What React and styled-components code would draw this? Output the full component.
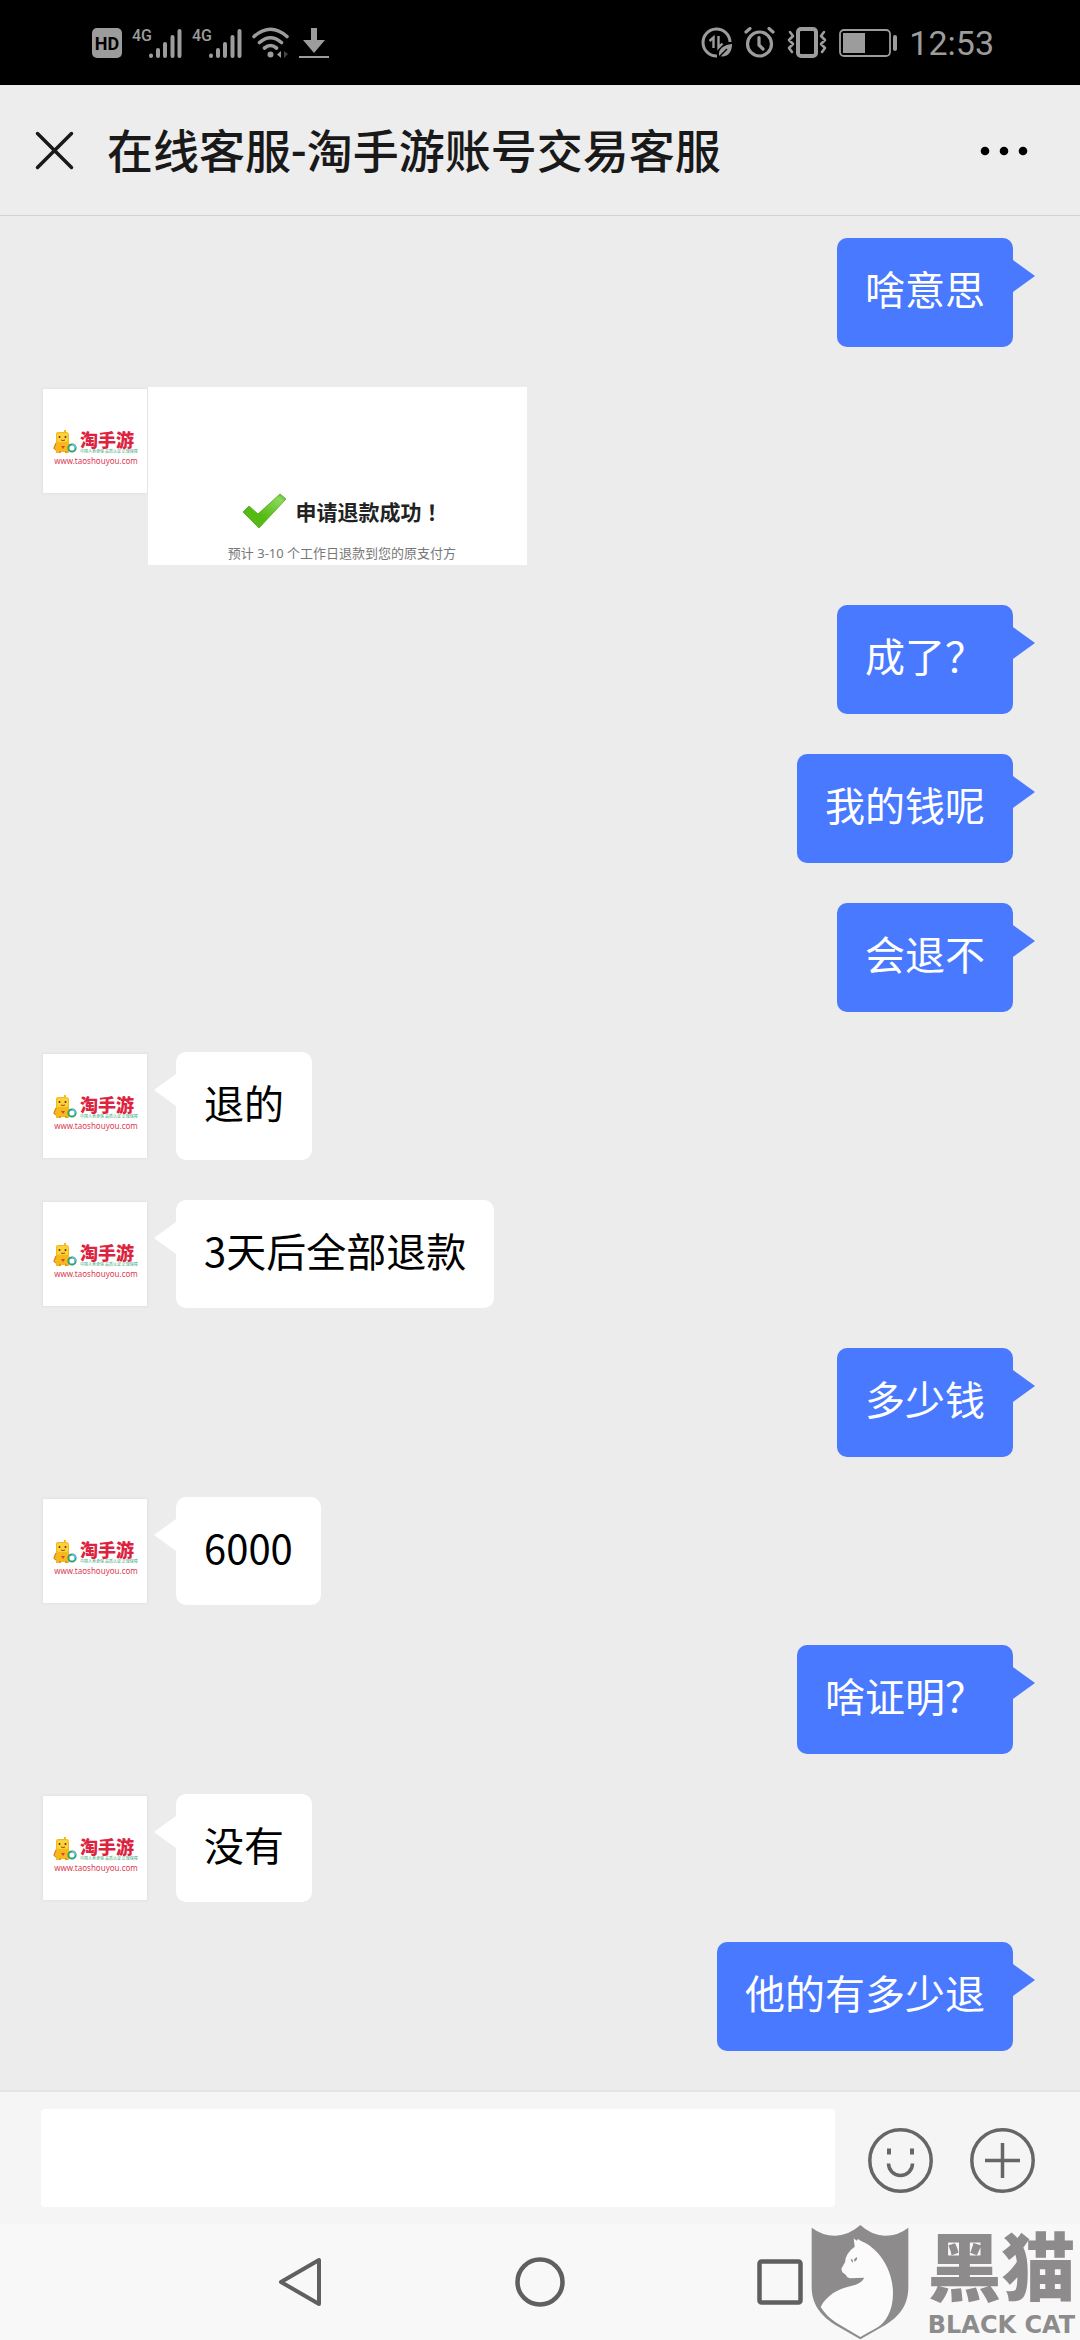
import React from 'react';
import styled, { createGlobalStyle } from 'styled-components';

const GlobalStyle = createGlobalStyle`
  * { box-sizing: border-box; }
  body {
    margin: 0;
    background: #ececec;
    font-family: "Noto Sans CJK SC", "Noto Sans", sans-serif;
    color: #000;
  }
  button {
    display: flex;
    padding: 0;
    border: 0;
    background: none;
    cursor: pointer;
  }
  svg { display: block; }
`;

const Screen = styled.div`
  display: flex;
  flex-direction: column;
  min-height: 100vh;
`;

const StatusBar = styled.div`
  display: flex;
  justify-content: space-between;
  align-items: center;
  height: 85px;
  padding: 0 86px 0 92px;
  background: #000;
  color: #9c9c9c;
`;

const StatusGroup = styled.div`
  display: flex;
  align-items: center;
  gap: ${(p) => p.$gap}px;
`;

const Clock = styled.time`
  font: 34px/40px Roboto, sans-serif;
`;

const Header = styled.header`
  display: flex;
  align-items: center;
  gap: 33px;
  height: 131px;
  padding: 0 52px 0 35px;
  background: #ededed;
  border-bottom: 1px solid #d2d2d2;
`;

const Title = styled.h1`
  flex: 1;
  margin: 0;
  padding-top: 4px;
  font-family: Roboto, "Noto Sans CJK SC", sans-serif;
  font-size: 46px;
  line-height: 60px;
  font-weight: 500;
  color: #191919;
`;

const Chat = styled.main`
  flex: 1;
  display: flex;
  flex-direction: column;
  gap: 40px;
  padding: 22px 42px 39px 43px;
`;

const Row = styled.div`
  display: flex;
  align-items: flex-start;
  justify-content: ${(p) => (p.$mine ? 'flex-end' : 'flex-start')};
  gap: ${(p) => (p.$tight ? 1 : 29)}px;
  padding-right: ${(p) => (p.$mine ? 25 : 0)}px;
`;

const Bubble = styled.p`
  position: relative;
  margin: 0;
  padding: 20px 28px 28px;
  border-radius: 10px;
  font-size: 40px;
  line-height: ${(p) => (p.$mine ? 61 : 60)}px;
  color: ${(p) => (p.$mine ? '#fff' : '#000')};
  background: ${(p) => (p.$mine ? '#4879ff' : '#fff')};

  &::after {
    content: "";
    position: absolute;
    top: 22px;
    ${(p) => (p.$mine ? 'left: 100%;' : 'right: 100%;')}
    border: 16px solid transparent;
    border-width: 16px ${(p) => (p.$mine ? 0 : 22)}px 16px ${(p) => (p.$mine ? 22 : 0)}px;
    border-${(p) => (p.$mine ? 'left' : 'right')}-color: ${(p) => (p.$mine ? '#4879ff' : '#fff')};
  }
`;

const AvatarBox = styled.div`
  flex: none;
  width: 104px;
  height: 104px;
  margin-top: 2px;
  padding-top: 41px;
  background: #fff;
  box-shadow: 0 0 2px 1px #e2e2e2;
`;

const Brand = styled.div`
  display: flex;
  gap: 3px;
  padding-left: 10px;
`;

const BrandText = styled.div`
  color: #dc2340;
  font-size: 18px;
  line-height: 18px;
  font-weight: 900;
  white-space: nowrap;
`;

const Slogan = styled.div`
  color: #3aa877;
  font-size: 4px;
  line-height: 6px;
  font-weight: 400;
`;

const Site = styled.div`
  padding-left: 2px;
  color: #dc3a50;
  font: 8px/14px "Noto Sans", sans-serif;
  text-align: center;
`;

const RefundCard = styled.section`
  display: flex;
  flex-direction: column;
  justify-content: flex-end;
  align-items: center;
  gap: 12px;
  width: 379px;
  height: 178px;
  padding-left: 9px;
  background: #fff;
`;

const RefundTitle = styled.h2`
  display: flex;
  align-items: center;
  gap: 9px;
  margin: 0;
  font-size: 21px;
  line-height: 36px;
  font-weight: 700;
  color: #222;
`;

const CenteredMark = styled.span`
  font-family: "Noto Sans CJK TC", sans-serif;
`;

const RefundNote = styled.p`
  margin: 0;
  font-family: "Noto Sans", "Noto Sans CJK SC", sans-serif;
  font-size: 13px;
  line-height: 24px;
  color: #777;
`;

const Composer = styled.form`
  display: flex;
  align-items: center;
  height: 134px;
  padding: 0 45px 0 41px;
  background: #f5f5f5;
  border-top: 2px solid #e4e4e4;
`;

const MessageInput = styled.input`
  flex: 1;
  min-width: 0;
  height: 98px;
  margin-right: 33px;
  padding: 0 20px;
  border: 0;
  border-radius: 4px;
  background: #fff;
  font: 40px/60px "Noto Sans CJK SC", sans-serif;
  outline: none;
`;

const Tools = styled.div`
  display: flex;
  gap: 37px;
  padding-top: 4px;
`;

const NavBar = styled.nav`
  position: relative;
  display: flex;
  justify-content: center;
  align-items: center;
  gap: 190px;
  height: 116px;
  background: #f8f8f8;
`;

const NavButton = styled.button`
  justify-content: center;
  width: 50px;
`;

const Watermark = styled.div`
  position: absolute;
  right: 2px;
  bottom: 0;
  display: flex;
  gap: 16px;
  height: 115px;
  color: #8d8b8b;
`;

const WatermarkText = styled.div`
  display: flex;
  flex-direction: column;
  align-items: center;
  gap: 5px;
  width: 153px;
  padding-top: 9px;
`;

const WatermarkName = styled.div`
  font-family: "Liberation Sans", "Noto Sans CJK SC", sans-serif;
  font-size: 74px;
  line-height: 72px;
  font-weight: 900;
`;

const WatermarkLatin = styled.div`
  font: 700 24px/28px "DejaVu Sans", sans-serif;
  white-space: nowrap;
`;

const HdIcon = () => (
  <svg width="30" height="30" viewBox="0 0 30 30">
    <rect width="30" height="30" rx="5" fill="currentColor" />
    <text x="15" y="22" textAnchor="middle" fontFamily="Roboto, sans-serif" fontWeight="700" fontSize="18" fill="#000">HD</text>
  </svg>
);

const SignalIcon = () => (
  <svg width="50" height="32" viewBox="0 0 50 32">
    <text x="0" y="14" fontFamily="Roboto, sans-serif" fontWeight="500" fontSize="16" fill="currentColor">4G</text>
    <g stroke="currentColor" strokeWidth="4" strokeLinecap="round">
      <path d="M19 28.5v.5M26 23v6M33 17v12M40.500 10v19M47.500 4v25" />
    </g>
  </svg>
);

const WifiIcon = () => (
  <svg width="37" height="32" viewBox="0 0 37 32">
    <g fill="none" stroke="currentColor" strokeWidth="3.600" strokeLinecap="round">
      <path d="M2 9.500Q18.500-5 35 9.500M7.500 15.500Q18.500 6 29.500 15.500M12.500 21Q18.500 16 24.500 21" />
    </g>
    <circle cx="18.500" cy="27.500" r="3" fill="currentColor" />
    <path d="M29 24v7l-4-3.500z" fill="currentColor" />
    <path d="M32 24l4 3-4 4z" fill="#444" />
  </svg>
);

const DownloadIcon = () => (
  <svg width="30" height="32" viewBox="0 0 30 32" fill="currentColor">
    <path d="M12 1h6v12h8L15 26 4 13h8zM0 29h30v2H0z" />
  </svg>
);

const DataIcon = () => (
  <svg width="31" height="31" viewBox="0 0 31 31" fill="none" stroke="currentColor" strokeWidth="3">
    <path d="M29 15A13.500 13.500 0 1 0 16 29" />
    <path d="M12.500 21V10.500L8.500 14M17.500 9v11.500l4-4" strokeWidth="2.400" />
    <path d="M31 17C22 18 17 22 18 29c8 2 13-3 13-12z" fill="currentColor" stroke="none" />
    <path d="M17 31l9-9" stroke="#000" strokeWidth="1.500" />
  </svg>
);

const AlarmIcon = () => (
  <svg width="31" height="31" viewBox="0 0 31 31" fill="none" stroke="currentColor" strokeWidth="3.200" strokeLinecap="round">
    <circle cx="15.500" cy="17" r="12" />
    <path d="M15 10.500V18l4 4M2 5l4-3.500M29 5l-4-3.500" />
  </svg>
);

const VibrateIcon = () => (
  <svg width="40" height="31" viewBox="0 0 40 31" fill="none" stroke="currentColor">
    <rect x="11" y="2" width="18" height="27" rx="3" strokeWidth="4" />
    <path d="M3 5l3 4-4 4 4 4-4 4 3 4M37 5l-3 4 4 4-4 4 4 4-3 4" strokeWidth="2.600" strokeLinejoin="round" strokeLinecap="round" />
  </svg>
);

const BatteryIcon = () => (
  <svg width="59" height="28" viewBox="0 0 59 28">
    <rect x="1" y="1" width="50" height="26" rx="4" fill="none" stroke="currentColor" strokeWidth="1.800" />
    <rect x="4" y="4" width="22" height="20" fill="currentColor" />
    <rect x="54" y="6" width="4" height="16" rx="2" fill="currentColor" />
  </svg>
);

const CloseIcon = () => (
  <svg width="39" height="39" viewBox="0 0 39 39" stroke="#191919" strokeWidth="3.500" strokeLinecap="round">
    <path d="M2.500 2.500l34 34M36.500 2.500l-34 34" />
  </svg>
);

const MoreIcon = () => (
  <svg width="48" height="12" viewBox="0 0 48 12">
    <circle cx="5" cy="7" r="4.300" />
    <circle cx="24" cy="7" r="4.300" />
    <circle cx="43" cy="7" r="4.300" />
  </svg>
);

const Mascot = () => (
  <svg width="24" height="24" viewBox="0 0 24 24">
    <path d="M3 4q0-2 2-2h6V0h2v2q3 0 3 3v8l2 4-2 2v4h-4v-1H8v1H3v-4l-2-2 2-4z" fill="#f6b81c" />
    <path d="M3 13L1 18l2 2M7 23v-2M13 23v-2" stroke="#d98310" strokeWidth="1.200" fill="none" />
    <rect x="4" y="3" width="11" height="9" rx="2" fill="#fcd23a" />
    <circle cx="6.500" cy="7" r="1" fill="#5b3413" />
    <circle cx="12.500" cy="7" r="1" fill="#5b3413" />
    <path d="M8 10q2 1 4 0" stroke="#9a4a12" fill="none" />
    <path d="M8 16h4l-2 3z" fill="#e0462c" />
    <circle cx="19" cy="18" r="3.600" fill="#fff" stroke="#2ba27a" strokeWidth="2" />
    <path d="M19 14.400a3.600 3.600 0 0 1 3.600 3.600" stroke="#6fb9c9" strokeWidth="2" fill="none" />
  </svg>
);

const CheckIcon = () => (
  <svg width="45" height="36" viewBox="0 0 45 36">
    <defs>
      <linearGradient id="tick" x1="0" y1="1" x2="1" y2="0">
        <stop offset="0.400" stopColor="#55bb12" />
        <stop offset="0.850" stopColor="#8bd95a" />
        <stop offset="1" stopColor="#5aa83a" />
      </linearGradient>
    </defs>
    <path d="M1 19l6-6 9 8L38 1l6 5-27 29z" fill="url(#tick)" stroke="#4fa51c" strokeWidth="0.800" />
  </svg>
);

const SmileIcon = () => (
  <svg width="65" height="65" viewBox="0 0 65 65" fill="none" stroke="#666" strokeWidth="3.500">
    <circle cx="32.500" cy="32.500" r="30.700" />
    <path d="M21 20.500v6M44 20.500v6" strokeWidth="4" />
    <path d="M20.500 35.500a12 12 0 0 0 24 0" />
  </svg>
);

const PlusIcon = () => (
  <svg width="65" height="65" viewBox="0 0 65 65" fill="none" stroke="#666" strokeWidth="3.500">
    <circle cx="32.500" cy="32.500" r="30.700" />
    <path d="M15 32.500h35M32.500 15v35" />
  </svg>
);

const CatShield = () => (
  <svg width="98" height="115" viewBox="62 75 294 345">
    <path
      d="M64 83Q98 108 135 107Q178 105 210 75Q242 105 283 107Q322 108 354 83V262C354 320 322 353 285 375L210 418L135 375C100 353 64 320 64 262Z"
      fill="currentColor"
    />
    <path
      d="M190 115L199 122L203 117L212 123C262 142 308 205 308 280C308 335 285 368 262 382L210 411L138 368Q108 349 91 321C108 286 145 266 182 258Q213 251 222 233L178 235Q169 232 166 224L156 217L153 206L164 187Q165 160 193 140Z"
      fill="#fbfbfb"
    />
    <path d="M181 176q8 2 7 12q-6-3-7-12zM191 178l9-7q2 9-7 14z" fill="currentColor" />
  </svg>
);

const Avatar = () => (
  <AvatarBox>
    <Brand>
      <Mascot />
      <BrandText>
        淘手游
        <Slogan>中国人寿承保 品质认证 正规保障</Slogan>
      </BrandText>
    </Brand>
    <Site>www.taoshouyou.com</Site>
  </AvatarBox>
);

const messages = [
  { mine: true, text: '啥意思' },
  { refund: true },
  { mine: true, text: '成了？' },
  { mine: true, text: '我的钱呢' },
  { mine: true, text: '会退不' },
  { text: '退的' },
  { text: '3天后全部退款' },
  { mine: true, text: '多少钱' },
  { text: '6000' },
  { mine: true, text: '啥证明？' },
  { text: '没有' },
  { mine: true, text: '他的有多少退' },
];

const Message = ({ mine, refund, text }) => (
  <Row $mine={mine} $tight={refund}>
    {!mine && <Avatar />}
    {refund ? (
      <RefundCard>
        <RefundTitle>
          <CheckIcon />
          <span>申请退款成功<CenteredMark lang="zh-TW">！</CenteredMark></span>
        </RefundTitle>
        <RefundNote>预计 3-10 个工作日退款到您的原支付方</RefundNote>
      </RefundCard>
    ) : (
      <Bubble $mine={mine}>{text}</Bubble>
    )}
  </Row>
);

export default function App() {
  return (
    <Screen>
      <GlobalStyle />
      <StatusBar>
        <StatusGroup $gap={10}>
          <HdIcon />
          <SignalIcon />
          <SignalIcon />
          <WifiIcon />
          <DownloadIcon />
        </StatusGroup>
        <StatusGroup $gap={12}>
          <DataIcon />
          <AlarmIcon />
          <VibrateIcon />
          <StatusGroup $gap={11}>
            <BatteryIcon />
            <Clock>12:53</Clock>
          </StatusGroup>
        </StatusGroup>
      </StatusBar>
      <Header>
        <button type="button" aria-label="关闭"><CloseIcon /></button>
        <Title>在线客服-淘手游账号交易客服</Title>
        <button type="button" aria-label="更多"><MoreIcon /></button>
      </Header>
      <Chat>
        {messages.map((m, i) => <Message key={i} {...m} />)}
      </Chat>
      <Composer onSubmit={(e) => e.preventDefault()}>
        <MessageInput type="text" aria-label="消息" />
        <Tools>
          <button type="button" aria-label="表情"><SmileIcon /></button>
          <button type="button" aria-label="添加"><PlusIcon /></button>
        </Tools>
      </Composer>
      <NavBar>
        <NavButton type="button" aria-label="返回">
          <svg width="44" height="50" viewBox="0 0 44 50" fill="none" stroke="#5f5f5f" strokeWidth="4" strokeLinejoin="round">
            <path d="M41 3v44L3 25z" />
          </svg>
        </NavButton>
        <NavButton type="button" aria-label="主页">
          <svg width="50" height="50" viewBox="0 0 50 50" fill="none" stroke="#5f5f5f" strokeWidth="4.500">
            <circle cx="25" cy="25" r="22.500" />
          </svg>
        </NavButton>
        <NavButton type="button" aria-label="最近任务">
          <svg width="46" height="46" viewBox="0 0 46 46" fill="none" stroke="#5f5f5f" strokeWidth="4.500">
            <rect x="2.500" y="2.500" width="41" height="41" rx="2" />
          </svg>
        </NavButton>
        <Watermark>
          <CatShield />
          <WatermarkText>
            <WatermarkName>黑猫</WatermarkName>
            <WatermarkLatin>BLACK CAT</WatermarkLatin>
          </WatermarkText>
        </Watermark>
      </NavBar>
    </Screen>
  );
}
